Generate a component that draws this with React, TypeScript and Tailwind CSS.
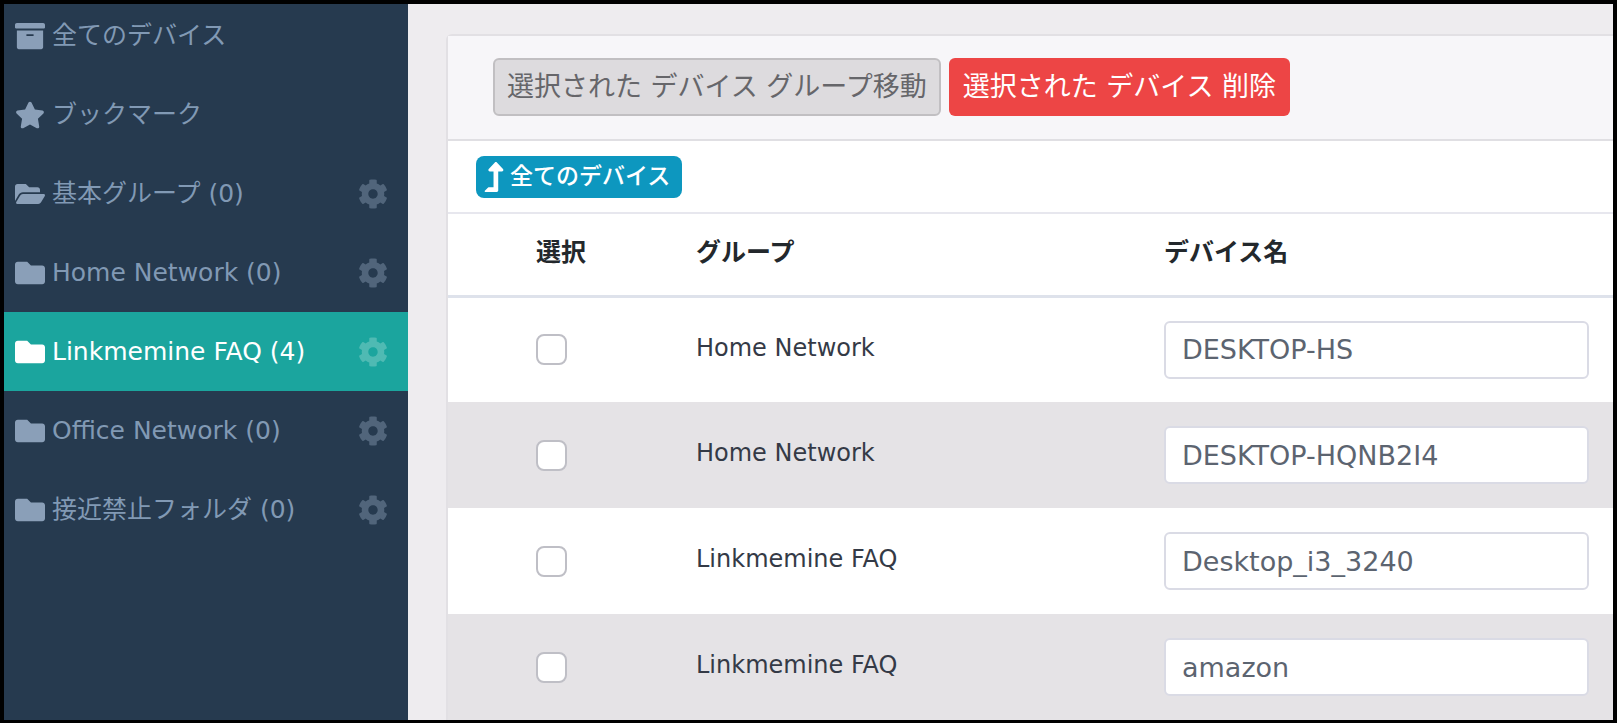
import { useState } from "react";
import { FaArchive, FaCog, FaFolder, FaFolderOpen, FaLevelUpAlt, FaStar } from "react-icons/fa";
import type { IconType } from "react-icons";

type Group = { label: string; icon: IconType; configurable: boolean };
type Device = { id: string; group: string; name: string };

const groups: Group[] = [
  { label: "全てのデバイス", icon: FaArchive, configurable: false },
  { label: "ブックマーク", icon: FaStar, configurable: false },
  { label: "基本グループ (0)", icon: FaFolderOpen, configurable: true },
  { label: "Home Network (0)", icon: FaFolder, configurable: true },
  { label: "Linkmemine FAQ (4)", icon: FaFolder, configurable: true },
  { label: "Office Network (0)", icon: FaFolder, configurable: true },
  { label: "接近禁止フォルダ (0)", icon: FaFolder, configurable: true },
];

const devices: Device[] = [
  { id: "d1", group: "Home Network", name: "DESKTOP-HS" },
  { id: "d2", group: "Home Network", name: "DESKTOP-HQNB2I4" },
  { id: "d3", group: "Linkmemine FAQ", name: "Desktop_i3_3240" },
  { id: "d4", group: "Linkmemine FAQ", name: "amazon" },
];

function Sidebar() {
  const [active, setActive] = useState(4);
  return (
    <nav className="w-[404px] shrink-0 overflow-hidden bg-[#263a4f]">
      <ul className="-mt-2">
        {groups.map((group, i) => {
          const Icon = group.icon;
          const isActive = i === active;
          return (
            <li
              key={group.label}
              className={
                isActive
                  ? "flex h-[79px] items-center bg-[#1ba59e] pr-5 pl-[11px] text-white"
                  : "flex h-[79px] items-center pr-5 pl-[11px] text-[#8199b4]"
              }
            >
              <a
                href="#"
                onClick={() => setActive(i)}
                className="flex flex-1 items-center gap-[7px] text-[25px] whitespace-nowrap"
              >
                <Icon
                  className={isActive ? "size-[30px] shrink-0" : "size-[30px] shrink-0 text-[#8a9fb8]"}
                />
                <span>{group.label}</span>
              </a>
              {group.configurable && (
                <button
                  type="button"
                  aria-label="設定"
                  className={isActive ? "text-[#4fbab3]" : "text-[#51657b]"}
                >
                  <FaCog className="size-[30px]" />
                </button>
              )}
            </li>
          );
        })}
      </ul>
    </nav>
  );
}

function DeviceTable() {
  return (
    <table className="w-full table-fixed border-collapse text-left text-2xl text-[#343a46]">
      <colgroup>
        <col className="w-[224px]" />
        <col className="w-[468px]" />
        <col />
      </colgroup>
      <thead>
        <tr className="h-[82px] border-b-3 border-[#dee2eb] text-[25px] text-[#23282c]">
          <th scope="col" className="pb-1 pl-[88px] font-bold">選択</th>
          <th scope="col" className="pb-1 pl-6 font-bold">グループ</th>
          <th scope="col" className="pb-1 pl-6 font-bold">デバイス名</th>
        </tr>
      </thead>
      <tbody>
        {devices.map((device) => (
          <tr key={device.id} className="h-[106px] even:bg-[#e5e3e6]">
            <td className="pl-[88px]">
              <input
                type="checkbox"
                aria-label={`${device.name} 選択`}
                className="block size-[31px] appearance-none rounded-lg border-2 border-[#bfbfc6] bg-white checked:bg-[#0d97bf]"
              />
            </td>
            <td className="pb-1 pl-6">{device.group}</td>
            <td className="px-6">
              <input
                type="text"
                aria-label="デバイス名"
                defaultValue={device.name}
                className="block h-[58px] w-full rounded-md border-2 border-[#dadbe5] bg-white px-4 text-[27px] text-[#5c6470]"
              />
            </td>
          </tr>
        ))}
      </tbody>
    </table>
  );
}

export default function App() {
  return (
    <div className="flex h-screen overflow-hidden border-t-4 border-r-4 border-b-3 border-l-4 border-black bg-[#eeecef] font-['DejaVu_Sans','Noto_Sans_CJK_JP',sans-serif]">
      <Sidebar />
      <main className="min-w-0 flex-1 overflow-hidden pt-[30px] pl-[38px]">
        <section className="rounded-tl-md border-t-2 border-l-2 border-[#e2e0e4] bg-white">
          <header className="flex gap-2 border-b-2 border-[#e0dfe3] bg-[#f7f6f9] pt-[22px] pb-[23px] pl-[45px]">
            <button
              type="button"
              className="h-[58px] rounded-md border-2 border-[#c1bfc2] bg-[#dddbde] px-3 text-[27px] whitespace-nowrap text-[#66666a]"
            >
              選択された デバイス グループ移動
            </button>
            <button
              type="button"
              className="h-[58px] rounded-md bg-[#ed4545] px-3.5 text-[27px] whitespace-nowrap text-white"
            >
              選択された デバイス 削除
            </button>
          </header>
          <div className="flex h-[73px] items-center border-b-2 border-[#e7e7ee] pl-7">
            <a
              href="#"
              className="flex h-[42px] items-center gap-px rounded-lg bg-[#0d97bf] pr-3 pl-[3px] text-[23px] font-medium whitespace-nowrap text-white"
            >
              <FaLevelUpAlt className="size-[30px]" />
              全てのデバイス
            </a>
          </div>
          <DeviceTable />
        </section>
      </main>
    </div>
  );
}
